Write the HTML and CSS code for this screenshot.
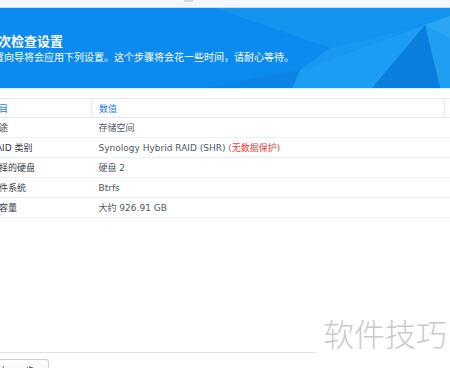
FILE: index.html
```html
<!DOCTYPE html>
<html lang="zh-CN">
<head>
<meta charset="UTF-8">
<meta name="viewport" content="width=device-width, initial-scale=1.0">
<title>再次检查设置</title>
<link rel="stylesheet" href="styles.css">
</head>
<body>

<div id="wizard">
    <!-- Window top strip -->
    <div class="topbar"><span class="topbar-mark"></span></div>

    <!-- Blue banner -->
    <div class="banner">
        <svg class="banner-art" viewBox="0 0 450 80" preserveAspectRatio="none">
            <polygon points="215,0 450,0 450,8 425,17 330,40" fill="#1394f0"/>
            <polygon points="330,40 425,17 300,62" fill="#1898f1"/>
            <polygon points="425,17 450,8 450,80 440,80" fill="#1f9ff2"/>
            <polygon points="425,17 440,80 372,80" fill="#0b7ddd"/>
            <polygon points="300,62 425,17 372,80 292,80" fill="#1a9df2"/>
            <polygon points="205,80 300,62 292,80" fill="#0c84e6"/>
            <polygon points="425,17 450,8 450,30" fill="#2aa6f3"/>
        </svg>
        <div class="banner-text">
            <div class="banner-title">再次检查设置</div>
            <div class="banner-desc">设置向导将会应用下列设置。这个步骤将会花一些时间，请耐心等待。</div>
        </div>
    </div>

    <!-- Settings summary -->
    <div class="main">
        <table class="summary">
            <thead>
                <tr>
                    <th class="col-name">项目</th>
                    <th class="col-value">数值</th>
                    <th class="col-pad"></th>
                </tr>
            </thead>
            <tbody>
                <tr><td class="col-name">用途</td><td class="col-value">存储空间</td><td></td></tr>
                <tr><td class="col-name">RAID 类别</td><td class="col-value">Synology Hybrid RAID (SHR) <span class="warn">(无数据保护)</span></td><td></td></tr>
                <tr><td class="col-name">选择的硬盘</td><td class="col-value">硬盘 2</td><td></td></tr>
                <tr><td class="col-name">文件系统</td><td class="col-value">Btrfs</td><td></td></tr>
                <tr><td class="col-name">总容量</td><td class="col-value">大约 926.91 GB</td><td></td></tr>
            </tbody>
        </table>
    </div>

    <!-- Footer buttons -->
    <div class="footer">
        <button class="btn">上一步</button>
    </div>

    <div class="watermark">软件技巧</div>
</div>

</body>
</html>
```

FILE: styles.css
```css
html, body {
    margin: 0;
    height: 100%;
}

body {
    font-family: "DejaVu Sans", "Noto Sans CJK SC", sans-serif;
    background-color: #ffffff;
    overflow: hidden;
}

#wizard {
    position: relative;
    width: 450px;
    height: 368px;
    display: flex;
    flex-direction: column;
    overflow: hidden;
}

.topbar {
    height: 7px;
    background-color: #f4f7fb;
    border-bottom: 1px solid #bfe3fb;
    position: relative;
    flex: none;
}

.topbar-mark {
    position: absolute;
    left: 184px;
    top: 0;
    width: 9px;
    height: 2px;
    background-color: #d3dae2;
}

.banner {
    position: relative;
    height: 80px;
    flex: none;
    background-color: #0b8bef;
    border-bottom: 1px solid #d9eefc;
    overflow: hidden;
}

.banner-art {
    position: absolute;
    left: 0;
    top: 0;
    width: 100%;
    height: 100%;
}

.banner-text {
    position: relative;
    padding-top: 27px;
    color: #ffffff;
    white-space: nowrap;
}

.banner-title {
    font-size: 13px;
    font-weight: bold;
    line-height: 14px;
    margin-left: -15px;
}

.banner-desc {
    font-size: 10px;
    line-height: 12px;
    margin-top: 3px;
    margin-left: -16px;
}

.main {
    flex: 1;
    padding-top: 9px;
}

.summary {
    border-collapse: collapse;
    margin-left: -20px;
    width: 470px;
    font-size: 9px;
    white-space: nowrap;
}

.summary th,
.summary td {
    padding: 0;
    text-align: left;
    vertical-align: middle;
}

.summary thead th {
    height: 18px;
    font-weight: normal;
    color: #1a7fd8;
    border-top: 1px solid #e1e7ec;
    border-bottom: 1px solid #e1e7ec;
}

.summary tbody td {
    height: 19px;
    border-bottom: 1px solid #eef1f4;
}

.summary .col-name {
    width: 101px;
    padding-left: 10px;
    color: #333a41;
}

.summary thead .col-name {
    color: #1a7fd8;
    border-right: 1px solid #e6eaee;
}

.summary .col-value {
    width: 345px;
    padding-left: 7px;
    color: #4d5863;
}

.summary thead .col-value {
    color: #1a7fd8;
    border-right: 1px solid #e6eaee;
}

.warn {
    color: #e8453c;
}

.footer {
    flex: none;
    height: 9px;
    border-top: 1px solid #dde2e6;
    padding-top: 6px;
    padding-left: 0;
}

.btn {
    margin-left: -12px;
    width: 61px;
    height: 22px;
    border: 1px solid #c5ced7;
    border-radius: 3px;
    background: linear-gradient(#ffffff, #eef2f6);
    font-family: "DejaVu Sans", "Noto Sans CJK SC", sans-serif;
    font-size: 9px;
    letter-spacing: 4px;
    color: #36404a;
    padding: 0;
    vertical-align: top;
}

.watermark {
    position: absolute;
    right: 0;
    top: 313px;
    padding: 0 3px 0 7px;
    background-color: #ffffff;
    font-family: "Noto Sans CJK SC", sans-serif;
    font-size: 31px;
    font-weight: 300;
    line-height: 40px;
    color: #cacaca;
}
```
